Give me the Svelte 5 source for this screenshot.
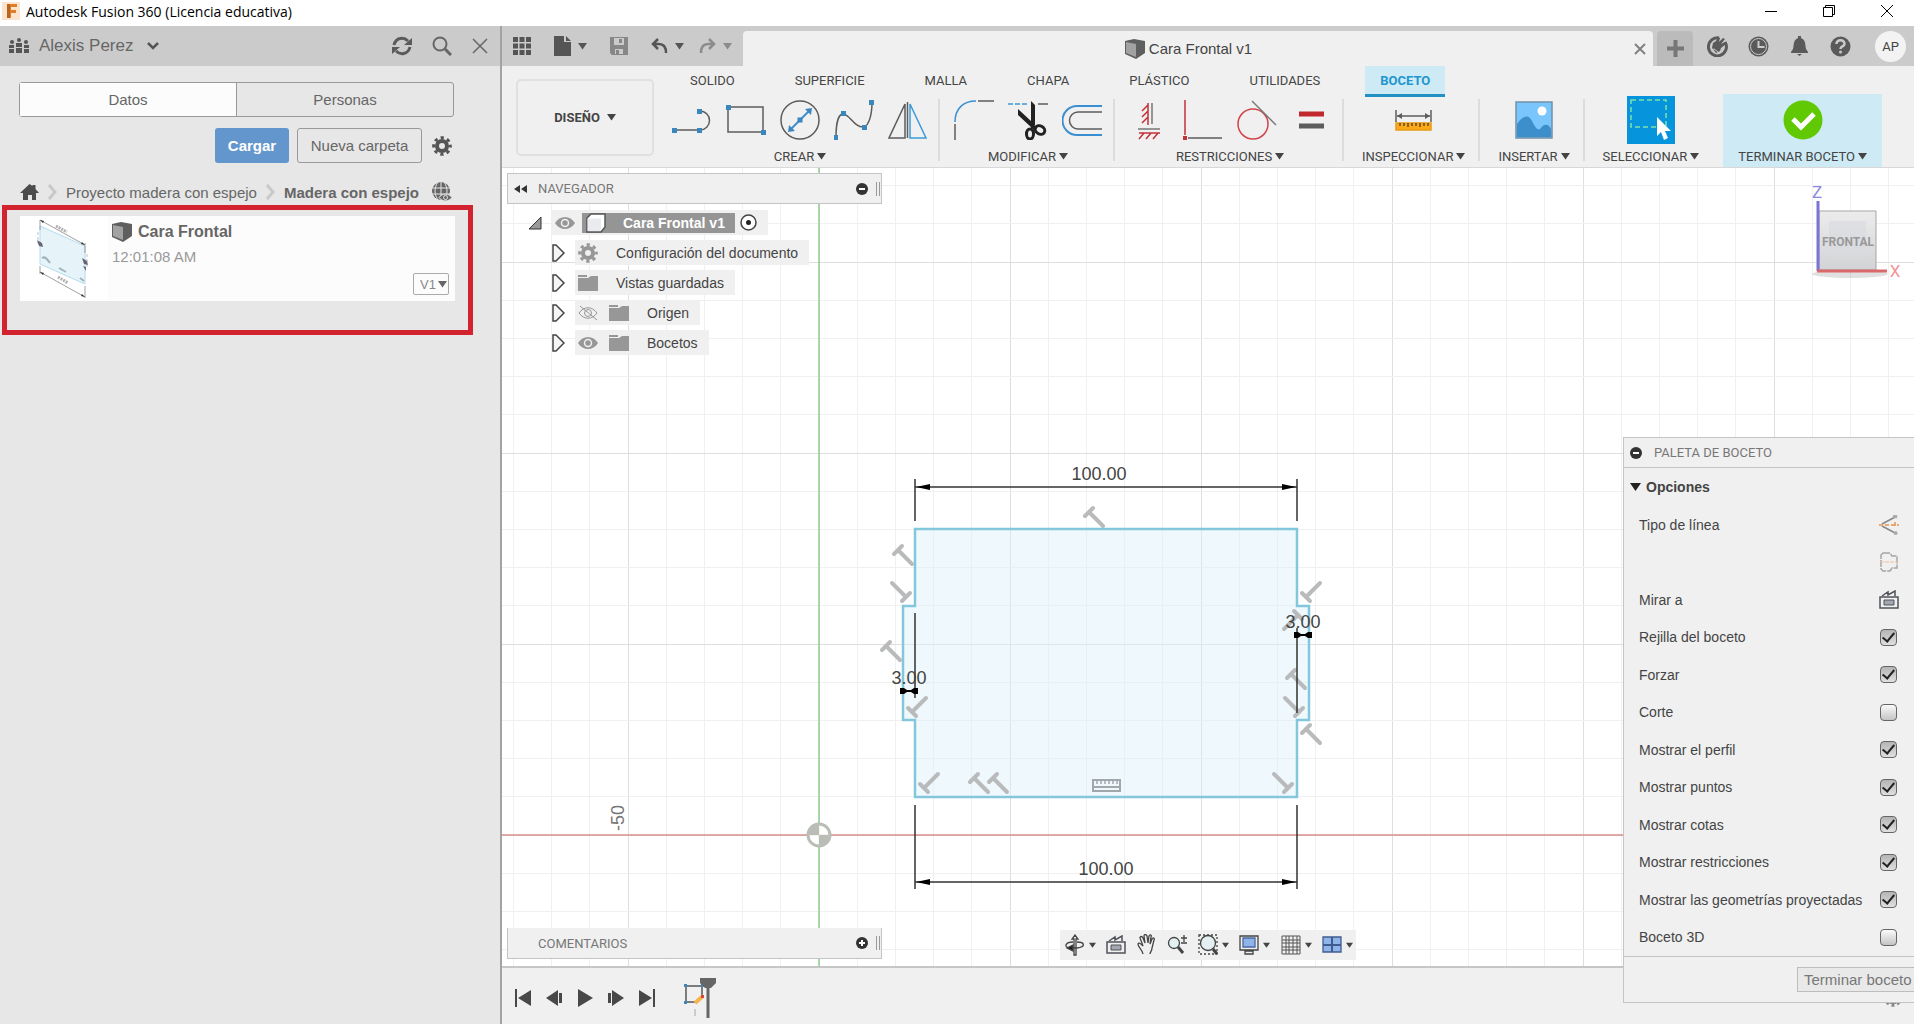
<!-- Fusion 360 workspace: data panel, ribbon, sketch canvas, palette and timeline -->

<script lang="ts">

	type Mark = [x: number, y: number, turn: number];

	interface Option {
		label: string;
		on: boolean;
	}

	// ribbon
	const tabs = ['SOLIDO', 'SUPERFICIE', 'MALLA', 'CHAPA', 'PLÁSTICO', 'UTILIDADES', 'BOCETO'];
	let activeTab = $state('BOCETO');

	const groups = [
		{ label: 'CREAR', icons: ['line', 'rect', 'circle', 'spline', 'mirror'] },
		{ label: 'MODIFICAR', icons: ['fillet', 'trim', 'offset'] },
		{ label: 'RESTRICCIONES', icons: ['fix', 'coincident', 'tangent', 'equal'] },
		{ label: 'INSPECCIONAR', icons: ['measure'] },
		{ label: 'INSERTAR', icons: ['image'] },
		{ label: 'SELECCIONAR', icons: ['select'] },
	];

	// browser tree
	const tree = [
		{ label: 'Configuración del documento', icons: ['gear'] },
		{ label: 'Vistas guardadas', icons: ['folder'] },
		{ label: 'Origen', icons: ['hidden', 'folder'] },
		{ label: 'Bocetos', icons: ['eye', 'folder'] },
	];

	// sketch palette
	let options: Option[] = $state([
		{ label: 'Rejilla del boceto', on: true },
		{ label: 'Forzar', on: true },
		{ label: 'Corte', on: false },
		{ label: 'Mostrar el perfil', on: true },
		{ label: 'Mostrar puntos', on: true },
		{ label: 'Mostrar cotas', on: true },
		{ label: 'Mostrar restricciones', on: true },
		{ label: 'Mostrar las geometrías proyectadas', on: true },
		{ label: 'Boceto 3D', on: false },
	]);

	// sketch canvas, everything measured from the origin point
	const STEP = 38.2;
	const columns = Array.from({ length: 70 }, (_, i) => i - 10);
	const rows = Array.from({ length: 50 }, (_, i) => i - 20);

	const marks: Mark[] = [
		[270, -323, 0], [79, -285, 0], [87, -238, 180], [67, -189, 0],
		[93, -123, 270], [105, -47, 270], [155, -57, 0], [174, -57, 0],
		[469, -47, 180], [487, -238, 270], [479, -220, 90], [472, -161, 0],
		[480, -123, 180], [487, -106, 0],
	];

	const viewTools = [
		{ icon: 'orbit', name: 'Órbita', menu: true },
		{ icon: 'look', name: 'Mirar a', menu: false },
		{ icon: 'hand', name: 'Encuadre', menu: false },
		{ icon: 'zoom', name: 'Zoom', menu: false },
		{ icon: 'fit', name: 'Ajustar', menu: true },
		{ icon: 'display', name: 'Visualización', menu: true },
		{ icon: 'grid', name: 'Rejilla', menu: true },
		{ icon: 'views', name: 'Ventanas', menu: true },
	];

	const playback = [
		{ name: 'Inicio', d: 'M1 2h2v18H1zM17 3v16L4 11z' },
		{ name: 'Anterior', d: 'M13 3v16L1 11zM14 6h3v10h-3z' },
		{ name: 'Reproducir', d: 'M2 2v18l15-9z' },
		{ name: 'Siguiente', d: 'M1 6h3v10H1zM5 3v16l12-8z' },
		{ name: 'Final', d: 'M1 3v16l13-8zM15 2h2v18h-2z' },
	];

</script>

{#snippet caret()}
	<svg class="caret" width="9" height="7" viewBox="0 0 9 7"><path d="M0 0h9L4.500 6.500z" fill="currentColor" /></svg>
{/snippet}

{#snippet gear(size: number, color: string)}
	<svg width={size} height={size} viewBox="0 0 20 20" fill="none" stroke={color}>
		<circle cx="10" cy="10" r="5" stroke-width="4" />
		<circle cx="10" cy="10" r="8.300" stroke-width="3" stroke-dasharray="3.260 3.260" stroke-dashoffset="1.630" />
	</svg>
{/snippet}

{#snippet cube()}
	<svg width="20" height="20" viewBox="0 0 20 20">
		<path d="M0 2L9 0l11 2v12l-9 6-11-5z" fill="#5f5f5f" />
		<path d="M1 3l10 2v13L1 14z" fill="#a2a2a2" />
	</svg>
{/snippet}

{#snippet lookAt()}
	<svg width="20" height="20" viewBox="0 0 20 20">
		<path d="M1 7h18v11H1z" fill="none" stroke="#50525a" stroke-width="1.500" />
		<path d="M3 6l6-4v3l7-4v5" fill="none" stroke="#50525a" stroke-width="1.500" />
		<path d="M5 10h10v5H5z" fill="#a4a7b0" stroke="#50525a" />
	</svg>
{/snippet}

<!-- icons of the ribbon groups -->
{#snippet tool(name: string)}
	{#if name == 'select'}
		<svg width="48" height="48" viewBox="0 0 48 48">
			<path d="M0 0h48v48H0z" fill="#0695dd" />
			<path d="M4 4h35v27H4z" fill="none" stroke="#7fe0a8" stroke-width="1.500" stroke-dasharray="5 3" />
			<path d="M30 21v19l4-4 3 8 4-2-3-7h6z" fill="#fff" />
		</svg>
	{:else}
		<svg width="40" height="40" viewBox="0 0 40 40" fill="none" stroke="#5c5c5c" stroke-width="1.500">
			{#if name == 'line'}
				<path d="M2 30h26M28 11a9.500 9.500 0 0 1 0 19" />
				<path d="M0 28h5v5H0zM25 28h5v5h-5zM25 9h5v5h-5z" class="dot" />
			{:else if name == 'rect'}
				<path d="M2 7h35v25H2z" />
				<path d="M0 5h5v5H0zM35 30h5v5h-5z" class="dot" />
			{:else if name == 'circle'}
				<circle cx="20" cy="20" r="19" />
				<path d="M11 29L29 11" stroke="#3a8fd0" stroke-width="2" />
				<path d="M17.500 17.500h5v5h-5zM8 32l1-7 6 6zM32 8l-7 1 6 6z" class="dot" />
			{:else if name == 'spline'}
				<path d="M2 37C2 22 5 14 9 14C16 14 20 28 30 27C35 25 38 15 38 2" />
				<path d="M0 35h4v5H0zM7 11h5v5H7zM28 25h5v5h-5zM35 0h5v5h-5z" class="dot" />
			{:else if name == 'mirror'}
				<path d="M17 4v34H1zM19.500 2v36" />
				<path d="M22 4v34h16z" stroke="#3a9ad9" />
			{:else if name == 'fillet'}
				<path d="M1 24v16M24 1h16" />
				<path d="M1 22C1 9 9 1 22 1" stroke="#3a8fd0" />
			{:else if name == 'trim'}
				<path d="M0 4h20" stroke="#3a9ad9" stroke-dasharray="5 2" />
				<path d="M30 4h10" />
				<path d="M10 9v6l14 13 3-3V5l-4-4v20z" fill="#222" stroke="none" />
				<path d="M24 26l4 3" stroke="#222" stroke-width="4" />
				<ellipse cx="22" cy="34" rx="3.500" ry="5" stroke="#222" stroke-width="3" />
				<ellipse cx="32" cy="30" rx="5" ry="4" stroke="#222" stroke-width="3" transform="rotate(30 32 30)" />
			{:else if name == 'offset'}
				<path d="M40 12H16a8 8 0 0 0 0 17h24" />
				<path d="M40 6H15a14.500 14.500 0 0 0 0 29h25" stroke="#3a8fd0" stroke-width="2" />
			{:else if name == 'fix'}
				<path d="M23 3v21M9 29h22" stroke="#777" />
				<path d="M19 3v22M19 5l-6 6M19 11l-6 6M19 17l-6 6M10 33h21M15 33l-5 6M22 33l-5 6M29 33l-5 6" stroke="#c23237" />
			{:else if name == 'coincident'}
				<path d="M5 38h34" />
				<path d="M2 0v35" stroke="#c23237" />
				<path d="M0 36h4v4H0z" fill="#c23237" stroke="none" />
			{:else if name == 'tangent'}
				<circle cx="16" cy="24" r="15" stroke="#d0454b" />
				<path d="M15 1l24 24" stroke="#777" />
			{:else if name == 'equal'}
				<path d="M8 14h25" stroke="#c0282d" stroke-width="5" />
				<path d="M8 26h25" stroke-width="5" />
			{:else if name == 'measure'}
				<path d="M2 10v12M37 10v12M3 16h33" />
				<path d="M3 16l5-3v6zM36 16l-5-3v6z" fill="#5c5c5c" stroke="none" />
				<path d="M2 23h35v7H2z" fill="#fba919" stroke="#e59c14" />
				<path d="M6 23v3M10 23v3M14 23v4M18 23v3M22 23v3M26 23v4M30 23v3M34 23v3" stroke="#6b4a12" />
			{:else if name == 'image'}
				<path d="M2 2h36v36H2z" fill="#7ac5fb" stroke="#7290a8" />
				<path d="M3 24C8 17 14 13 18 21C21 27 24 32 27 28C30 23 35 24 37 29v8H3z" fill="#3c8fcb" stroke="none" />
				<circle cx="28" cy="11" r="4.500" fill="#fff" stroke="none" />
			{/if}
		</svg>
	{/if}
{/snippet}

<!-- icons of the browser tree -->
{#snippet node(name: string)}
	{#if name == 'gear'}
		{@render gear(20, '#979797')}
	{:else}
		<svg width="20" height="18" viewBox="0 0 20 18" fill="none">
			{#if name == 'folder'}
				<path d="M0 4h10l3-2h7v15H0zM0 1h9v2H0z" fill="#979797" />
			{:else if name == 'eye'}
				<path d="M0 9C5 1 15 1 20 9C15 17 5 17 0 9z" fill="#979797" />
				<circle cx="10" cy="9" r="3.500" fill="#979797" stroke="#f0f0f0" stroke-width="1.500" />
			{:else}
				<path d="M1 9C6 2 14 2 19 9C14 16 6 16 1 9zM2 2l17 14" stroke="#979797" />
				<circle cx="10" cy="9" r="3.500" stroke="#979797" />
			{/if}
		</svg>
	{/if}
{/snippet}

<!-- icons of the view bar -->
{#snippet view(name: string)}
	{#if name == 'look'}
		{@render lookAt()}
	{:else}
		<svg width="20" height="22" viewBox="0 0 20 22" fill="none" stroke="#444" stroke-width="1.300">
			{#if name == 'orbit'}
				<path d="M9 21V5H7l3-4 3 4h-2v16zM8 8C0 8-1 13 4 14M12 8c8 0 9 5 0 6H8" />
				<path d="M2 14l6-3v6z" fill="#222" />
			{:else if name == 'hand'}
				<path d="M6 20C5 15 1 13 1 10c1-2 3 0 5 2L3 4c0-2 2-2 3 0l2 5-1-7c0-2 2-2 3 0l1 7 1-7c1-2 3-1 2 1l-1 7 2-5c1-2 3-1 2 1l-2 8c0 3-2 4-2 6" />
			{:else if name == 'zoom'}
				<circle cx="7" cy="9" r="5.500" fill="#e3eff0" />
				<path d="M11 13l5 6" stroke-width="3" />
				<path d="M17 1v7M14 4h6M14 9h6" />
			{:else if name == 'fit'}
				<path d="M1 1h18v19H1z" stroke-dasharray="2 2" />
				<circle cx="10" cy="9" r="7.500" fill="#e3eff0" />
				<path d="M15 15l4 5" stroke-width="3" />
			{:else if name == 'display'}
				<path d="M1 2h18v14H1zM6 17h8v3H6z" fill="#eee" />
				<path d="M4 4h12v9H4z" fill="#8fb4ea" stroke="#4a68a0" />
			{:else if name == 'grid'}
				<path d="M1 2h18v18H1zM5 2v18M8 2v18M12 2v18M16 2v18M1 6h18M1 9h18M1 13h18M1 16h18" stroke="#555" stroke-width="1" />
			{:else}
				<path d="M1 3h18v15H1z" fill="#8fb4ea" stroke="#3f5c8e" />
				<path d="M10 3v15M1 11h18" stroke="#3f5c8e" stroke-width="2" />
			{/if}
		</svg>
	{/if}
{/snippet}

<div class="app">
	<header class="titlebar">
		<svg width="18" height="18" viewBox="0 0 18 18">
			<path d="M0 0h18v18H0z" fill="#fbe3cd" />
			<path d="M5 2h10v3H9v3h5v3H9v5H5z" fill="#e07b28" />
			<path d="M5 2h3v14H5z" fill="#b9641f" />
		</svg>
		<h1>Autodesk Fusion 360 (Licencia educativa)</h1>
		<button aria-label="Minimizar"><svg width="14" height="14" viewBox="0 0 14 14"><path d="M1 7.500h12" /></svg></button>
		<button aria-label="Restaurar"><svg width="14" height="14" viewBox="0 0 14 14"><path d="M1.500 3.500h9v9h-9zM3.500 3.500v-2h9v9h-2" /></svg></button>
		<button aria-label="Cerrar"><svg width="14" height="14" viewBox="0 0 14 14"><path d="M1 1l12 12M13 1L1 13" /></svg></button>
	</header>

	<div class="body">
		<!-- data panel -->
		<aside>
			<div class="team">
				<button class="user">
					<svg width="20" height="16" viewBox="0 0 20 16" fill="#555">
						<circle cx="10" cy="2" r="2" /><circle cx="3" cy="4" r="2" /><circle cx="17" cy="4" r="2" />
						<path d="M7 5h6v4H7zM0 7h5v3H0zM15 7h5v3h-5zM0 11h5v4H0zM7 10h6v5H7zM15 11h5v4h-5z" />
					</svg>
					<span>Alexis Perez</span>
					<svg width="12" height="8" viewBox="0 0 12 8"><path d="M1 1l5 5 5-5" fill="none" stroke="#555" stroke-width="2.500" /></svg>
				</button>
				<button aria-label="Actualizar">
					<svg width="20" height="20" viewBox="0 0 20 20" fill="none" stroke="#5a5a5a" stroke-width="3">
						<path d="M2 9C4 1 12 1 16 5M18 11C16 19 8 19 4 15" />
						<path d="M20 2v7h-8zM0 18v-7h8z" fill="#5a5a5a" stroke="none" />
					</svg>
				</button>
				<button aria-label="Buscar">
					<svg width="20" height="20" viewBox="0 0 20 20" fill="none" stroke="#666">
						<circle cx="8" cy="8" r="6.500" stroke-width="2" /><path d="M13 13l6 6" stroke-width="3" />
					</svg>
				</button>
				<button aria-label="Cerrar panel">
					<svg width="16" height="16" viewBox="0 0 16 16"><path d="M1 1l14 14M15 1L1 15" stroke="#666" stroke-width="1.500" /></svg>
				</button>
			</div>

			<div class="switch">
				<button class="on">Datos</button>
				<button>Personas</button>
			</div>

			<div class="actions">
				<button class="upload">Cargar</button>
				<button class="folder">Nueva carpeta</button>
				<button class="plain" aria-label="Ajustes">{@render gear(20, '#555')}</button>
			</div>

			<nav class="crumbs">
				<a href="#inicio" aria-label="Inicio">
					<svg width="19" height="16" viewBox="0 0 19 16"><path d="M9.500 0l3 2V1h3v4L19 9h-3v7h-4v-5H8v5H3V9H0z" fill="#4c4c4c" /></svg>
				</a>
				<svg width="9" height="16" viewBox="0 0 9 16"><path d="M1 1l6 7-6 7" fill="none" stroke="#c9c9c9" stroke-width="3" /></svg>
				<a href="#proyecto">Proyecto madera con espejo</a>
				<svg width="9" height="16" viewBox="0 0 9 16"><path d="M1 1l6 7-6 7" fill="none" stroke="#c9c9c9" stroke-width="3" /></svg>
				<a href="#madera"><b>Madera con espejo</b></a>
				<button class="plain" aria-label="Ver en la web">
					<svg width="20" height="20" viewBox="0 0 20 20" fill="none">
						<circle cx="9" cy="9" r="9" fill="#666" />
						<path d="M0 6h18M0 12h18M9 0v18M6 0C2 6 2 12 6 18M12 0c4 6 4 12 0 18" stroke="#e7e7e7" />
						<path d="M7 15.500C10 11 17 11 20 15.500C17 20 10 20 7 15.500z" fill="#666" stroke="#e7e7e7" />
						<circle cx="13.500" cy="15.500" r="2" fill="#666" stroke="#e7e7e7" />
					</svg>
				</button>
			</nav>

			<section class="marked">
				<article>
					<svg class="thumb" width="88" height="85" viewBox="0 0 88 85" fill="none">
						<path d="M20 10l45 20v38L20 48z" fill="#e6f4fa" stroke="#b5dcec" />
						<path d="M20 4v10M65 27v10M20 4l45 25M20 50v8M65 70v12M20 56l45 25" stroke="#888" stroke-width=".8" />
						<path d="M20 4l4 1-1 2zM65 29l-4-1 1-2zM20 56l4 1-1 2zM65 81l-4-1 1-2z" fill="#333" />
						<path d="M36 10l11 6M38 61l10 6" stroke="#b0b0b0" stroke-width="3" stroke-dasharray="2 1" />
						<path d="M18 16v12M67 38v15" stroke="#b8c4ca" stroke-dasharray="3 2" />
						<path d="M22 42c3-2 5 1 8 5M39 52l7 4M60 62l4 3" stroke="#9fb3bb" stroke-width="2" />
						<path d="M17 24l5 3 1 4-4-1zM62 42l5 3 1 4-4-1zM63 50l3 1v4z" fill="#667" />
					</svg>
					<div class="info">
						<h2>{@render cube()} Cara Frontal</h2>
						<time>12:01:08 AM</time>
						<label class="version">
							<select aria-label="Versión"><option>V1</option></select>
							{@render caret()}
						</label>
					</div>
				</article>
			</section>
		</aside>

		<main>
			<!-- document bar -->
			<div class="docbar">
				<div class="quick">
					<button aria-label="Panel de datos">
						<svg width="18" height="18" viewBox="0 0 18 18" fill="#555"><path d="M0 0h5v5H0zM6.500 0h5v5h-5zM13 0h5v5h-5zM0 6.500h5v5H0zM6.500 6.500h5v5h-5zM13 6.500h5v5h-5zM0 13h5v5H0zM6.500 13h5v5h-5zM13 13h5v5h-5z" /></svg>
					</button>
					<button aria-label="Archivo">
						<svg width="17" height="20" viewBox="0 0 17 20" fill="#555"><path d="M0 0h10v6h7v14H0zM12 0l5 5h-5z" /></svg>
						{@render caret()}
					</button>
					<button aria-label="Guardar">
						<svg width="18" height="18" viewBox="0 0 18 18"><path d="M0 0h18v18H2l-2-2z" fill="#878787" /><path d="M4 1h10v7H4zM5 12h8v5H5z" fill="#cbcbcb" /><path d="M9 2h3v4H9zM6 13h3v4H6z" fill="#878787" /></svg>
					</button>
					<button aria-label="Deshacer">
						<svg width="17" height="16" viewBox="0 0 17 16" fill="none" stroke="#555" stroke-width="2.500"><path d="M7 1L2 6l5 5M2 6h6c5 0 7 4 7 9" /></svg>
						{@render caret()}
					</button>
					<button aria-label="Rehacer" class="dim">
						<svg width="17" height="16" viewBox="0 0 17 16" fill="none" stroke="#8c8c8c" stroke-width="2.500"><path d="M10 1l5 5-5 5M15 6H9C4 6 2 10 2 15" /></svg>
						{@render caret()}
					</button>
				</div>
				<div class="doc">
					<span>{@render cube()} Cara Frontal v1</span>
					<button aria-label="Cerrar documento"><svg width="12" height="12" viewBox="0 0 12 12"><path d="M1 1l10 10M11 1L1 11" stroke="#808080" stroke-width="2" /></svg></button>
				</div>
				<button class="add" aria-label="Nuevo diseño"><svg width="17" height="17" viewBox="0 0 17 17"><path d="M8.500 0v17M0 8.500h17" stroke="#777" stroke-width="4" /></svg></button>
				<div class="account">
					<button aria-label="Extensiones">
						<svg width="21" height="21" viewBox="0 0 21 21" fill="none">
							<path d="M12 2A9 9 0 1 0 18 6" stroke="#5a5a5a" stroke-width="3" />
							<path d="M5 12l1-5 3-2 2-4 2 1-1 4 4-4 2 1-4 5 4-2 1 2-5 4-1 3-4 2z" fill="#5a5a5a" />
							<path d="M4 14l3-1 4 3" stroke="#cbcbcb" />
						</svg>
					</button>
					<button aria-label="Estado del trabajo">
						<svg width="21" height="21" viewBox="0 0 21 21" fill="none"><circle cx="10.500" cy="10.500" r="10" fill="#5a5a5a" /><circle cx="10.500" cy="10.500" r="8" stroke="#cbcbcb" /><path d="M10.500 5v6h6" stroke="#cbcbcb" stroke-width="2" /></svg>
					</button>
					<button aria-label="Notificaciones">
						<svg width="21" height="21" viewBox="0 0 21 21" fill="#5a5a5a"><path d="M9 0h3v2c5 2 4 7 5 11l2 3v1H2v-1l2-3c1-4 0-9 5-11zM8 18h5l-2.500 2z" /></svg>
					</button>
					<button aria-label="Ayuda">
						<svg width="21" height="21" viewBox="0 0 21 21" fill="none"><circle cx="10.500" cy="10.500" r="10" fill="#5a5a5a" /><path d="M6.500 8C6 3 15 3 14.500 8C14 11 10.500 10 10.500 13" stroke="#cbcbcb" stroke-width="2.500" /><circle cx="10.500" cy="16" r="1.500" fill="#cbcbcb" /></svg>
					</button>
					<button class="avatar">AP</button>
				</div>
			</div>

			<!-- ribbon -->
			<div class="ribbon">
				<button class="workspace">DISEÑO {@render caret()}</button>
				<div class="sheets">
					<div class="tabs">
						{#each tabs as tab}
							<button class:active={tab == activeTab} onclick={() => (activeTab = tab)}>{tab}</button>
						{/each}
					</div>
					<div class="groups">
						{#each groups as group}
							<div class="group">
								<div class="icons">
									{#each group.icons as icon}
										<button aria-label={icon}>{@render tool(icon)}</button>
									{/each}
								</div>
								<button class="menu">{group.label} {@render caret()}</button>
							</div>
						{/each}
						<div class="group finish">
							<div class="icons">
								<button aria-label="Terminar">
									<svg width="40" height="40" viewBox="0 0 40 40"><circle cx="20" cy="20" r="19.500" fill="#61c903" /><path d="M10 19l8 8 13-13" fill="none" stroke="#fff" stroke-width="5" /></svg>
								</button>
							</div>
							<button class="menu">TERMINAR BOCETO {@render caret()}</button>
						</div>
					</div>
				</div>
			</div>

			<div class="stage">
				<div class="canvas">
					<svg class="sketch" width="100%" height="100%">
						<g transform="translate(317 667)">
							<g shape-rendering="crispEdges">
								{#each columns as c}
									<line x1={c * STEP} x2={c * STEP} y1="-800" y2="1200" stroke={c % 5 ? '#f0f0f0' : '#dedede'} />
								{/each}
								{#each rows as r}
									<line x1="-400" x2="2400" y1={r * STEP} y2={r * STEP} stroke={r % 5 ? '#f0f0f0' : '#dedede'} />
								{/each}
							</g>
							<path d="M96-306H478v77h12v114h-12v77H96v-77H84v-114h12z" fill="#dceffa" fill-opacity=".45" />
							<path d="M0-800V1200" stroke="#8fcf8f" stroke-width="1.500" />
							<path d="M-400 0H2400" stroke="#dc8f8f" stroke-width="1.500" />
							<circle r="11" fill="#fff" fill-opacity=".8" stroke-width="3" stroke="#b9bdb6" />
							<path d="M0 0V-10A10 10 0 0 0-10 0zM0 0V10A10 10 0 0 0 10 0z" fill="#b9bdb6" />
							<text transform="rotate(-90)" x="4" y="-195" fill="#777">-50</text>

							<!-- constraints -->
							{#each marks as [x, y, turn]}
								<path d="M-4 4L4-4M0 0L14 14" transform="translate({x} {y}) rotate({turn})" stroke="#b8babb" stroke-width="4" stroke-linecap="round" />
							{/each}
							<path d="M274-55h27v11h-27zM274-48h27" fill="none" stroke="#a2a7aa" stroke-width="2" />
							<path d="M278-55v4M282-55v4M286-55v4M290-55v4M294-55v4M298-55v4" stroke="#a2a7aa" stroke-width="1.500" />

							<path d="M96-306H478v77h12v114h-12v77H96v-77H84v-114h12z" fill="none" stroke="#84c6dc" stroke-width="2.500" />

							<!-- dimensions -->
							<g stroke="#333" stroke-width="1.500">
								<path d="M96-356v42M478-356v42M96-348h382M96-30v84M478-30v84M96 47h382M96-222v85M478-207v85" />
							</g>
							<path d="M97-348l14-3v6zM477-348l-14-3v6zM97 47l14-3v6zM477 47l-14-3v6z" fill="#000" />
							<path d="M81-147h4l3 2h4l3-2h4v6h-4l-3-2h-4l-3 2h-4zM475-203h4l3 2h4l3-2h4v6h-4l-3-2h-4l-3 2h-4z" fill="#000" />
							<g text-anchor="middle" fill="#444">
								<text x="280" y="-355">100.00</text>
								<text x="287" y="40">100.00</text>
								<text x="90" y="-151">3.00</text>
								<text x="484" y="-207">3.00</text>
							</g>
						</g>
					</svg>

					<svg class="viewcube" width="100" height="110" viewBox="0 0 100 110">
						<defs>
							<linearGradient id="face" x2="0" y2="1"><stop stop-color="#ececec" /><stop offset="1" stop-color="#d2d3d5" /></linearGradient>
						</defs>
						<ellipse cx="46" cy="97" rx="38" ry="4" fill="#000" fill-opacity=".12" />
						<path d="M15 34h57v59H15z" fill="url(#face)" stroke="#a5a5a5" />
						<path d="M25 44h37v37H25z" fill="#d9dbe0" fill-opacity=".6" />
						<path d="M14 24v70" stroke="#7a74d6" stroke-width="3" />
						<path d="M13 94h70" stroke="#d9696c" stroke-width="3" />
						<text x="13" y="21" class="axis" fill="#8d88e0">Z</text>
						<text x="91" y="100" class="axis" fill="#ee9698">X</text>
						<text x="44" y="69" class="front">FRONTAL</text>
					</svg>

					<section class="browser">
						<div class="bar">
							<svg width="13" height="8" viewBox="0 0 13 8"><path d="M6 0v8L0 4zM13 0v8L7 4z" fill="#333" /></svg>
							<span>NAVEGADOR</span>
							<button aria-label="Contraer"><svg width="12" height="12" viewBox="0 0 12 12"><circle cx="6" cy="6" r="6" fill="#333" /><path d="M3 6h6" stroke="#fff" stroke-width="2" /></svg></button>
							<i></i>
						</div>
						<ul>
							<li class="root">
								<svg width="14" height="14" viewBox="0 0 14 14"><path d="M13 1v12H1z" fill="#999" stroke="#333" /></svg>
								<div class="item">
									{@render node('eye')}
									<b>
										<svg width="20" height="20" viewBox="0 0 20 20"><path d="M1 5l4-4h14v13l-4 5H1z" fill="#fff" stroke="#555" stroke-width="1.500" /><path d="M1.500 5.500H15V18H1.500z" fill="#e9ebef" /></svg>
										Cara Frontal v1
									</b>
									<svg width="17" height="17" viewBox="0 0 17 17"><circle cx="8.500" cy="8.500" r="7.500" fill="#fff" stroke="#444" stroke-width="1.500" /><circle cx="8.500" cy="8.500" r="2.500" fill="#222" /></svg>
								</div>
							</li>
							{#each tree as entry}
								<li>
									<svg width="13" height="18" viewBox="0 0 13 18"><path d="M1 1h3l8 8-8 8H1z" fill="#f4f4f4" stroke="#444" stroke-width="1.500" /></svg>
									<div class="item">
										{#each entry.icons as icon}
											{@render node(icon)}
										{/each}
										<span>{entry.label}</span>
									</div>
								</li>
							{/each}
						</ul>
					</section>

					<section class="comments bar">
						<span>COMENTARIOS</span>
						<button aria-label="Expandir"><svg width="12" height="12" viewBox="0 0 12 12"><circle cx="6" cy="6" r="6" fill="#333" /><path d="M3 6h6M6 3v6" stroke="#fff" stroke-width="2" /></svg></button>
						<i></i>
					</section>

					<div class="viewbar">
						{#each viewTools as t}
							<button aria-label={t.name}>{@render view(t.icon)}{#if t.menu}{@render caret()}{/if}</button>
						{/each}
					</div>
				</div>

				<!-- timeline -->
				<footer>
					{#each playback as p}
						<button aria-label={p.name}><svg width="18" height="22" viewBox="0 0 18 22"><path d={p.d} fill="#484848" /></svg></button>
					{/each}
					<svg class="feature" width="34" height="42" viewBox="0 0 34 42" fill="none">
						<path d="M2 9h16v10M2 9v16h9" stroke="#555" stroke-width="1.500" />
						<path d="M11 26l8-7" stroke="#f5b44c" stroke-width="4" />
						<path d="M0 7h3v3H0zM17 7h3v3h-3zM0 24h3v3H0z" class="dot" />
						<path d="M17 18h3v3h-3z" fill="#d6463c" />
						<path d="M11 32v7" stroke="#ccc" stroke-width="2" />
						<path d="M16 1h16v5l-5 5h-6l-5-5z" fill="#666" />
						<path d="M24 10v31" stroke="#666" stroke-width="3" />
					</svg>
					<button class="settings" aria-label="Ajustes de la línea de tiempo">{@render gear(18, '#888')}</button>
				</footer>

				<!-- sketch palette -->
				<section class="palette">
					<header>
						<button aria-label="Contraer paleta"><svg width="12" height="12" viewBox="0 0 12 12"><circle cx="6" cy="6" r="6" fill="#333" /><path d="M3 6h6" stroke="#fff" stroke-width="2" /></svg></button>
						PALETA DE BOCETO
					</header>
					<h3><svg width="11" height="8" viewBox="0 0 11 8"><path d="M0 0h11L5.500 8z" fill="#222" /></svg> Opciones</h3>
					<div class="options">
						<div class="option">
							Tipo de línea
							<button aria-label="Construcción">
								<svg width="20" height="20" viewBox="0 0 20 20" fill="none" stroke="#888" stroke-width="1.500"><path d="M3 9L18 1M3 11l15 8" /><path d="M14 1l4 1M15 19l3-2" stroke-width="3" stroke="#aaa" /><path d="M0 10h20M16 7v6" stroke="#e8934d" stroke-dasharray="4 2" /></svg>
							</button>
						</div>
						<div class="option">
							<button aria-label="Línea de eje">
								<svg width="20" height="20" viewBox="0 0 20 20" fill="none" stroke="#a5a5a5"><path d="M4 1h7l2 3h5v12h-5l-2 3H4l-2-2V3z" stroke-width="1.500" stroke-dasharray="7 1" /><path d="M1 10h18" stroke="#eec0a0" stroke-dasharray="4 1" /></svg>
							</button>
						</div>
						<div class="option">
							Mirar a
							<button aria-label="Mirar a">{@render lookAt()}</button>
						</div>
						{#each options as option}
							<label class="option">
								{option.label}
								<input type="checkbox" bind:checked={option.on} />
							</label>
						{/each}
					</div>
					<div class="end">
						<button>Terminar boceto</button>
					</div>
				</section>
			</div>
		</main>
	</div>
</div>

<style>

	:global(body){
		margin: 0;
	}

	.app{
		--bar:#cbcbcb;
		--panel:#f0f0f0;
		--text:#444;
		--ui:Roboto, "Liberation Sans", sans-serif;

		display: flex;
		flex-direction: column;
		min-height: 100vh;
		overflow: hidden;
		font: 15px "Liberation Sans", Arial, sans-serif;
		color: var(--text);
		background: #fff;
	}

	.app *{
		box-sizing: border-box;
	}

	svg{
		display: block;
		flex: none;
	}

	button{
		display: flex;
		align-items: center;
		justify-content: center;
		margin: 0;
		padding: 0;
		border: 0;
		background: none;
		font: inherit;
		color: inherit;
		white-space: nowrap;
	}

	.dot{
		fill: #3a87bd;
		stroke: none;
	}

	/* window title */
	.titlebar{
		display: flex;
		align-items: center;
		gap: 4px;
		height: 26px;
		padding: 0 0 4px 2px;
		color: #000;

		& h1{
			flex: 1;
			margin: 0 0 0 2px;
			font: 14px "Open Sans", "Noto Sans", sans-serif;
		}

		& button{
			width: 54px;
		}

		& button path{
			fill: none;
			stroke: #000;
		}
	}

	.body{
		flex: 1;
		display: flex;
	}

	/* data panel */
	aside{
		flex: none;
		width: 502px;
		border-right: 2px solid #a3a3a3;
		background: #e7e7e7;
		color: #666;
	}

	.team{
		display: flex;
		align-items: center;
		gap: 20px;
		height: 40px;
		padding: 0 12px 0 9px;
		background: var(--bar);
	}

	.user{
		margin-right: auto;
		gap: 10px;
		font-size: 17px;

		& svg:last-child{
			margin-left: 4px;
		}
	}

	.switch{
		display: flex;
		height: 35px;
		margin: 16px 46px 0 19px;
		border: 1px solid #999;
		border-radius: 3px;

		& button{
			flex: 1;
		}

		& .on{
			border-right: 1px solid #999;
			background: #fcfcfc;
		}
	}

	.actions{
		display: flex;
		align-items: center;
		justify-content: flex-end;
		gap: 8px;
		margin: 11px 48px 0 0;
	}

	.upload{
		width: 74px;
		height: 35px;
		border-radius: 3px;
		background: #6396cd;
		color: #fff;
		font-weight: bold;
	}

	.folder{
		width: 125px;
		height: 35px;
		margin-right: 2px;
		border: 1px solid #999;
		border-radius: 3px;
	}

	.crumbs{
		display: flex;
		align-items: center;
		gap: 9px;
		height: 42px;
		padding: 16px 48px 0 20px;

		& a{
			color: inherit;
			text-decoration: none;
			white-space: nowrap;
		}

		& button{
			margin-left: auto;
		}
	}

	.marked{
		width: 471px;
		height: 130px;
		margin-left: 2px;
		padding: 6px 13px;
		border: 5px solid #d2232e;
	}

	article{
		display: flex;
		height: 85px;
		background: #fcfcfc;
	}

	.thumb{
		background: #fff;
	}

	.info{
		flex: 1;
		display: flex;
		flex-direction: column;
		padding: 6px 6px 6px 4px;

		& h2{
			display: flex;
			align-items: center;
			gap: 6px;
			margin: 0 0 6px;
			font-size: 16px;
			line-height: 20px;
		}

		& time{
			color: #999;
		}
	}

	.version{
		display: flex;
		align-items: center;
		align-self: flex-end;
		width: 36px;
		height: 22px;
		margin-top: auto;
		border: 1px solid #aaa;
		border-radius: 2px;

		& select{
			appearance: none;
			width: 24px;
			padding: 0 0 0 6px;
			border: 0;
			background: none;
			font: 13px "Liberation Sans", Arial, sans-serif;
			color: #888;
		}
	}

	/* document bar */
	main{
		flex: 1;
		display: flex;
		flex-direction: column;
		min-width: 0;
	}

	.docbar{
		display: flex;
		height: 40px;
		padding-top: 5px;
		background: var(--bar);
	}

	.quick{
		display: flex;
		align-items: center;
		gap: 23px;
		width: 241px;
		padding: 0 0 5px 11px;

		& button{
			gap: 7px;
			color: #555;
		}

		& .dim{
			margin-left: -8px;
			color: #8c8c8c;
		}
	}

	.doc{
		flex: 1;
		display: flex;
		align-items: center;
		padding-right: 7px;
		border-radius: 4px 4px 0 0;
		background: var(--panel);

		& span{
			flex: 1;
			display: flex;
			align-items: center;
			justify-content: center;
			gap: 4px;
		}
	}

	.add{
		width: 36px;
		margin-left: 4px;
		border-radius: 4px 4px 0 0;
		background: #bbb;
	}

	.account{
		display: flex;
		align-items: center;
		gap: 20px;
		padding: 0 8px 5px 14px;
	}

	.avatar{
		width: 31px;
		height: 31px;
		margin-left: 4px;
		border-radius: 50%;
		background: #f3f3f3;
		font: 13px var(--ui);
	}

	/* ribbon */
	.ribbon{
		display: flex;
		height: 102px;
		padding-left: 14px;
		border-bottom: 1px solid #d8d8d8;
		background: var(--panel);
		font: 13px var(--ui);
	}

	.workspace{
		width: 138px;
		height: 77px;
		margin-top: 13px;
		gap: 7px;
		border: 2px solid #e0e0e0;
		border-radius: 5px;
		font-weight: bold;
	}

	.sheets{
		flex: 1;
		display: flex;
		flex-direction: column;
	}

	.tabs{
		display: flex;
		gap: 30px;
		height: 28px;
		padding-left: 21px;

		& button{
			height: 31px;
			padding: 0 15px;
			border-bottom: 3px solid transparent;
		}

		& .active{
			border-color: #2390c4;
			background: #cdeaf5;
			color: #2196cf;
			font-weight: bold;
		}
	}

	.groups{
		flex: 1;
		display: flex;
	}

	.group{
		position: relative;
		display: flex;
		flex-direction: column;
		align-items: center;
		padding: 0 13px 0 14px;
	}

	.group:nth-child(1){
		padding: 0 12px 0 18px;
	}

	.group:nth-child(4),
	.group:nth-child(5){
		padding: 0 15px 0 18px;
	}

	.group:nth-child(6){
		padding: 0 24px 0 18px;
	}

	.group:nth-child(-n+5)::after{
		content: "";
		position: absolute;
		inset: 5px 0 6px auto;
		width: 2px;
		background: #dcdcdc;
	}

	.icons{
		display: flex;
		align-items: center;
		gap: 14px;
		height: 52px;
	}

	.menu{
		gap: 3px;
		height: 20px;
	}

	.group.finish{
		padding: 0 15px;
		background: #cdeaf5;
	}

	/* canvas */
	.stage{
		position: relative;
		flex: 1;
		display: flex;
		flex-direction: column;
	}

	.canvas{
		position: relative;
		flex: 1;
		overflow: hidden;
	}

	.sketch{
		position: absolute;
		inset: 0;
		font: 18px "Liberation Sans", Arial, sans-serif;
	}

	.viewcube{
		position: absolute;
		top: 9px;
		right: 10px;
		text-anchor: middle;

		& .axis{
			font: 17px var(--ui);
		}

		& .front{
			font: bold 12px var(--ui);
			fill: #999;
		}
	}

	.bar{
		display: flex;
		align-items: center;
		width: 375px;
		height: 31px;
		padding: 0 1px 0 6px;
		border: 1px solid #c4c4c4;
		background: var(--panel);
		font: 13px var(--ui);
		color: #777;

		& span{
			flex: 1;
			padding-left: 11px;
		}

		& i{
			width: 4px;
			height: 14px;
			margin-left: 8px;
			border: solid #999;
			border-width: 0 1px;
		}
	}

	.browser{
		position: absolute;
		top: 5px;
		left: 5px;
		font-size: 14px;

		& ul{
			display: flex;
			flex-direction: column;
			gap: 5px;
			margin: 0;
			padding: 6px 0 0 45px;
			list-style: none;
		}

		& li{
			display: flex;
			align-items: center;
			gap: 10px;
			height: 25px;
		}

		& .root{
			margin-left: -24px;
		}

		& .item{
			display: flex;
			align-items: center;
			gap: 11px;
			height: 25px;
			padding: 0 11px 0 3px;
			background: var(--panel);
		}

		& .item span{
			padding-left: 7px;
		}

		& .root .item{
			gap: 5px;
		}

		& b{
			display: flex;
			align-items: center;
			gap: 17px;
			height: 20px;
			margin-left: 2px;
			padding: 0 10px 0 4px;
			background: #959595;
			color: #fff;
		}
	}

	.comments{
		position: absolute;
		bottom: 7px;
		left: 5px;
		border-top: 0;

		& span{
			padding-left: 24px;
		}
	}

	.viewbar{
		position: absolute;
		bottom: 6px;
		left: 50%;
		display: flex;
		align-items: center;
		justify-content: space-between;
		width: 296px;
		height: 30px;
		padding: 0 3px 0 5px;
		background: var(--panel);
		transform: translateX(-50%);

		& button{
			gap: 4px;
		}

		& :global(.caret){
			width: 7px;
		}
	}

	/* timeline */
	footer{
		display: flex;
		align-items: center;
		gap: 13px;
		height: 58px;
		padding: 4px 12px 0 12px;
		border-top: 2px solid #c6c6c6;
		background: var(--panel);
	}

	.feature{
		margin-left: 15px;
	}

	.settings{
		margin-left: auto;
	}

	/* sketch palette */
	.palette{
		position: absolute;
		right: 0;
		bottom: 21px;
		width: 291px;
		border: 1px solid #c4c4c4;
		border-right: 0;
		background: var(--panel);
		font-size: 14px;
		overflow: hidden;

		& header{
			display: flex;
			align-items: center;
			gap: 12px;
			height: 30px;
			padding-left: 6px;
			border-bottom: 1px solid #c4c4c4;
			font: 13px var(--ui);
			color: #777;
		}

		& h3{
			display: flex;
			align-items: center;
			gap: 5px;
			height: 38px;
			margin: 0;
			padding-left: 6px;
			font-size: 14px;
		}
	}

	.options{
		display: grid;
		grid-auto-rows: 1fr;
		height: 450px;
	}

	.option{
		display: flex;
		align-items: center;
		justify-content: space-between;
		padding: 0 15px;

		& button{
			margin-left: auto;
		}

		& input{
			appearance: none;
			display: grid;
			place-items: center;
			width: 17px;
			height: 17px;
			margin: 0 2px 0 0;
			border: 1px solid #666;
			border-radius: 4px;
			background: linear-gradient(#fafafa, #c4c4c4);
		}

		& input:checked{
			background: linear-gradient(#b4b4b4, #e0e0e0);
		}

		& input:checked::before{
			content: "";
			width: 5px;
			height: 10px;
			margin-bottom: 3px;
			border: solid #222;
			border-width: 0 2px 2px 0;
			transform: rotate(40deg);
		}
	}

	.end{
		height: 46px;
		padding: 10px 0 0 173px;
		border-top: 1px solid #c4c4c4;

		& button{
			height: 25px;
			padding: 0 6px;
			border: 1px solid #bdbdbd;
			background: #e9e9e9;
			font-size: 15px;
			color: #777;
		}
	}

</style>
